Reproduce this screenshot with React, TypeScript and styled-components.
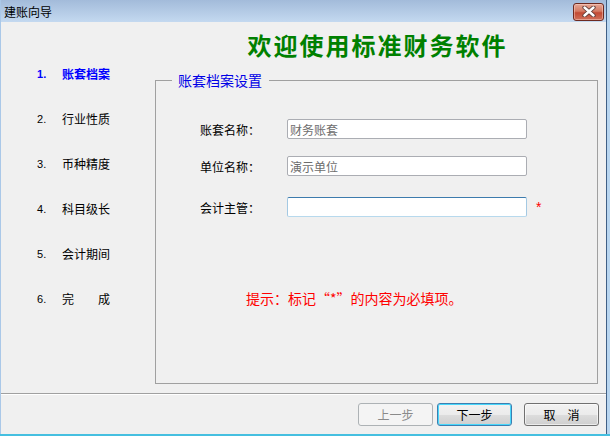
import React from 'react';
import styled, { createGlobalStyle } from 'styled-components';

const GlobalStyle = createGlobalStyle`
  html, body {
    margin: 0;
    padding: 0;
    background: #f0f0f0;
  }
  body {
    font-family: "Noto Sans CJK SC", "Liberation Sans", sans-serif;
    font-size: 12px;
  }
`;

const Frame = styled.div`
  width: 610px;
  height: 436px;
  box-sizing: border-box;
  display: flex;
  background: #b8d5ef;
  padding-right: 3px;
  border-bottom: 2px solid #45bfe0;
`;

const Window = styled.div`
  flex: 1;
  display: flex;
  flex-direction: column;
  background: #f0f0f0;
  border-left: 1px solid #aac8e8;
  border-right: 1px solid #3f5f85;
`;

const TitleBar = styled.div`
  height: 22px;
  flex-shrink: 0;
  display: flex;
  align-items: center;
  justify-content: space-between;
  padding: 0 2px 0 3px;
  background: linear-gradient(#a3bbda, #c4d9f0);
  color: #000;
  font-size: 12px;
`;

const CloseButton = styled.div`
  width: 29px;
  height: 16px;
  margin-top: 1px;
  display: flex;
  align-items: center;
  justify-content: center;
  border: 1px solid #6d2a20;
  border-radius: 3px;
  background: linear-gradient(#e6a796 0%, #d47a63 45%, #c24a34 55%, #d0705a 100%);
  box-shadow: inset 0 0 0 1px rgba(255, 220, 210, 0.45);
`;

const Content = styled.div`
  flex: 1;
  display: flex;
`;

const Nav = styled.ul`
  width: 154px;
  margin: 0;
  padding: 44px 0 0 0;
  list-style: none;
  display: flex;
  flex-direction: column;
  gap: 29px;
`;

const NavItem = styled.li<{ $active?: boolean }>`
  display: flex;
  align-items: center;
  height: 16px;
  line-height: 16px;
  padding-left: 36px;
  font-size: 12px;
  color: ${(p) => (p.$active ? '#0000ff' : '#000')};
  font-weight: ${(p) => (p.$active ? 700 : 400)};
`;

const NavNumber = styled.span`
  width: 25px;
  font-family: "Liberation Sans", sans-serif;
  font-size: 11px;
`;

const Right = styled.div`
  width: 443px;
  display: flex;
  flex-direction: column;
`;

const Heading = styled.h1`
  margin: 9px 0 0 0;
  height: 28px;
  line-height: 28px;
  text-align: center;
  font-size: 24px;
  font-weight: 700;
  letter-spacing: 2px;
  text-indent: 2px;
  color: #008000;
`;

const Group = styled.fieldset`
  margin: 13px 0 0 0;
  padding: 0;
  min-width: 0;
  height: 312px;
  box-sizing: border-box;
  border: 1px solid #a0a0a0;
`;

const GroupTitle = styled.legend`
  margin-left: 16px;
  padding: 0 7px 0 6px;
  font-size: 14px;
  line-height: 16px;
  color: #0000e6;
`;

const Row = styled.div<{ $top: number }>`
  display: flex;
  align-items: center;
  height: 20px;
  margin-top: ${(p) => p.$top}px;
  padding-left: 44px;
`;

const Label = styled.label`
  width: 87px;
  font-size: 12px;
  color: #000;
`;

const Field = styled.input<{ $focused?: boolean }>`
  width: 240px;
  height: 20px;
  box-sizing: border-box;
  margin: 0;
  padding: 0 2px;
  border: 1px solid;
  border-color: ${(p) =>
    p.$focused ? '#3d7bad #a4c9e3 #b7d9ed #a4c9e3' : '#abadb3'};
  border-radius: 2px;
  background: #fff;
  font-family: "Noto Sans CJK SC", sans-serif;
  font-size: 12px;
  color: #6d6d6d;
  outline: none;
`;

const Required = styled.span`
  margin-left: 9px;
  color: #ff0000;
  font-size: 14px;
  font-family: "Liberation Sans", sans-serif;
`;

const Hint = styled.p`
  margin: 73px 0 0 0;
  padding-left: 90px;
  line-height: 16px;
  font-size: 14px;
  color: #ff0000;
`;

const Separator = styled.div`
  margin-top: 8px;
  height: 1px;
  background: #a0a0a0;
  border-bottom: 1px solid #ffffff;
`;

const Footer = styled.div`
  display: flex;
  justify-content: flex-end;
  padding: 8px 7px 0 0;
  height: 31px;
`;

type Variant = 'disabled' | 'default' | 'normal';

const Button = styled.button<{ $variant: Variant; $gap?: number }>`
  width: 75px;
  height: 23px;
  margin: 0 0 0 ${(p) => p.$gap ?? 0}px;
  padding: 0;
  border-radius: 3px;
  font-family: "Noto Sans CJK SC", sans-serif;
  font-size: 12px;
  border: 1px solid
    ${(p) =>
      p.$variant === 'disabled' ? '#adb2b5' : p.$variant === 'default' ? '#3c7fb1' : '#707070'};
  color: ${(p) => (p.$variant === 'disabled' ? '#8a8a8a' : '#000')};
  background: ${(p) =>
    p.$variant === 'disabled'
      ? '#f4f4f4'
      : 'linear-gradient(#f2f2f2 0%, #ebebeb 50%, #dddddd 51%, #cfcfcf 100%)'};
  box-shadow: ${(p) =>
    p.$variant === 'default'
      ? 'inset 0 0 0 1px #48d7fb'
      : p.$variant === 'normal'
      ? 'inset 0 0 0 1px rgba(255,255,255,0.6)'
      : 'none'};
`;

const steps = ['账套档案', '行业性质', '币种精度', '科目级长', '会计期间', '完　　成'];

const App: React.FC = () => {
  return (
    <>
      <GlobalStyle />
      <Frame>
        <Window>
          <TitleBar>
            <span>建账向导</span>
            <CloseButton>
              <svg width="14" height="11" viewBox="0 0 14 11">
                <path d="M2.5 1.5 L11.5 9.5 M11.5 1.5 L2.5 9.5" stroke="#5a3a36" strokeWidth="4.2" strokeLinecap="round" />
                <path d="M2.5 1.5 L11.5 9.5 M11.5 1.5 L2.5 9.5" stroke="#ffffff" strokeWidth="2.4" strokeLinecap="round" />
              </svg>
            </CloseButton>
          </TitleBar>

          <Content>
            <Nav>
              {steps.map((s, i) => (
                <NavItem key={s} $active={i === 0}>
                  <NavNumber>{i + 1}.</NavNumber>
                  {s}
                </NavItem>
              ))}
            </Nav>

            <Right>
              <Heading>欢迎使用标准财务软件</Heading>
              <Group>
                <GroupTitle>账套档案设置</GroupTitle>
                <Row $top={31}>
                  <Label>账套名称：</Label>
                  <Field readOnly value="财务账套" />
                </Row>
                <Row $top={17}>
                  <Label>单位名称：</Label>
                  <Field readOnly value="演示单位" />
                </Row>
                <Row $top={21}>
                  <Label>会计主管：</Label>
                  <Field readOnly value="" $focused />
                  <Required>*</Required>
                </Row>
                <Hint>提示：标记“*”的内容为必填项。</Hint>
              </Group>
            </Right>
          </Content>

          <Separator />
          <Footer>
            <Button $variant="disabled" disabled>上一步</Button>
            <Button $variant="default" $gap={4}>下一步</Button>
            <Button $variant="normal" $gap={12}>取　消</Button>
          </Footer>
        </Window>
      </Frame>
    </>
  );
};

export default App;
